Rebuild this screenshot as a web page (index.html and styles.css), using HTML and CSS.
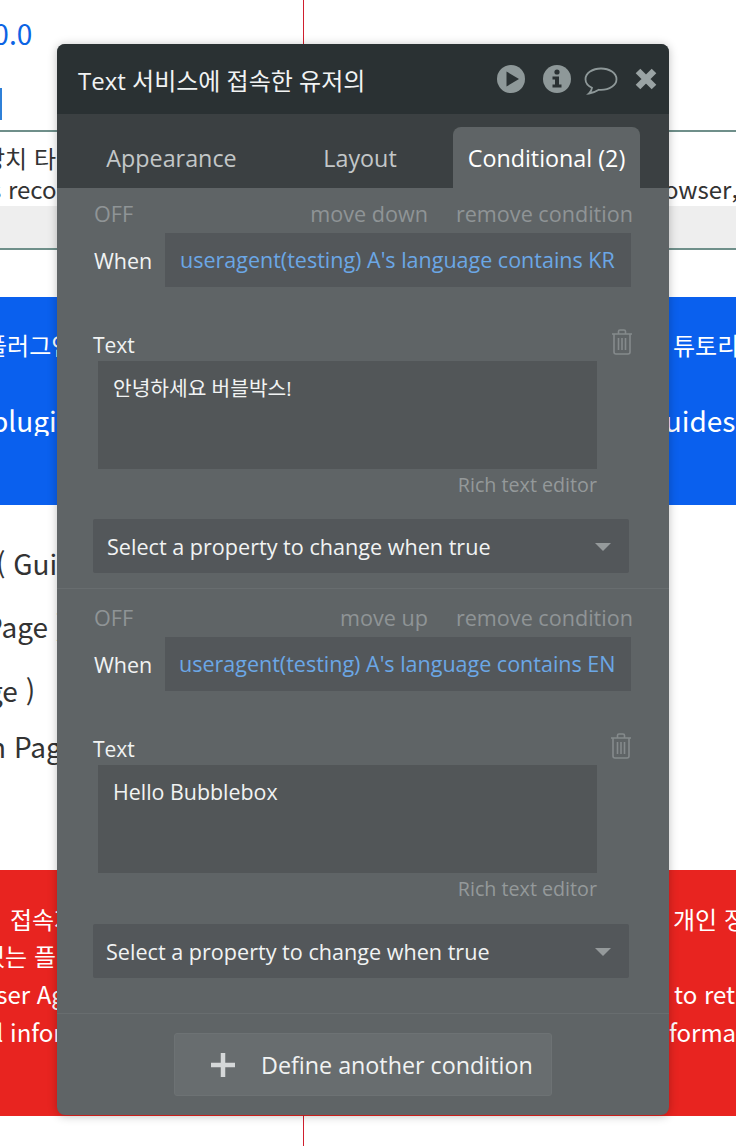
FILE: index.html
```html
<!DOCTYPE html>
<html lang="ko">
<head>
    <meta charset="UTF-8">
    <meta name="viewport" content="width=device-width, initial-scale=1.0">
    <title>Text 서비스에 접속한 유저의</title>
    <link rel="stylesheet" href="styles.css">
</head>
<body>
    <div class="page">
        <!-- page behind the editor, only the edges show -->
        <div class="guide-line"></div>
        <div class="version">1.0.0</div>
        <div class="version-tab"></div>
        <div class="info-table">
            <div class="line row-ko"><span class="left shift-ko">장치 타입</span><span class="right"></span></div>
            <div class="line row-en"><span class="left shift-en">s record</span><span class="right shift-browser">browser,</span></div>
            <div class="gray-row"></div>
        </div>
        <div class="band blue">
            <div class="line band-ko"><span class="left shift-plugin-ko">플러그인</span><span class="right shift-tutorial">튜토리얼</span></div>
            <div class="line band-en"><span class="left shift-plugin">plugin</span><span class="right shift-guides">guides</span></div>
        </div>
        <div class="links">
            <div class="link link-a">( Guide</div>
            <div class="link link-b">Page )</div>
            <div class="link link-c">ge )</div>
            <div class="link link-d">n Page</div>
        </div>
        <div class="band red">
            <div class="line red-1"><span class="left shift-r1">접속자</span><span class="right shift-r1b">개인 정보</span></div>
            <div class="line red-2"><span class="left shift-r2">있는 플러그인</span><span class="right"></span></div>
            <div class="line red-3"><span class="left shift-r3">User Agent</span><span class="right shift-r3b">to return</span></div>
            <div class="line red-4"><span class="left shift-r4">al information</span><span class="right shift-r4b">formation</span></div>
        </div>

        <div class="editor">
            <div class="editor-head">
                <div class="editor-title">Text 서비스에 접속한 유저의</div>
                <div class="head-icons">
                    <svg class="icon-play" width="28" height="28" viewBox="0 0 28 28"><circle cx="14" cy="14" r="14" fill="#8e9899"/><path d="M9.500 6.500 22 14 9.500 21.500Z" fill="#2a3133"/></svg>
                    <svg class="icon-info" width="28" height="28" viewBox="0 0 28 28"><circle cx="14" cy="14" r="14" fill="#8e9899"/><circle cx="14" cy="7" r="2.600" fill="#2a3133"/><path d="M9.500 11.500H16V19.500H18.500V22.500H9.500V19.500H12V14.500H9.500Z" fill="#2a3133"/></svg>
                    <svg class="icon-chat" width="34" height="28" viewBox="0 0 34 28"><path d="M17 1.500C8.500 1.500 1.500 6.200 1.500 12.200 1.500 15.800 4 18.800 8 20.700 7.800 22.800 6.800 25 5 26.500 9 26 12.500 24.300 14.800 22.800 15.500 22.900 16.300 22.900 17 22.900 25.500 22.900 32.500 18.200 32.500 12.200 32.500 6.200 25.500 1.500 17 1.500Z" fill="none" stroke="#8e9899" stroke-width="1.800"/></svg>
                    <svg class="icon-close" width="22" height="22" viewBox="0 0 22 22"><path d="M3 3 19 19M19 3 3 19" stroke="#9aa3a4" stroke-width="6.500"/></svg>
                </div>
            </div>
            <div class="tabs">
                <div class="tab tab-appearance">Appearance</div>
                <div class="tab tab-layout">Layout</div>
                <div class="tab tab-active">Conditional (2)</div>
            </div>

            <div class="condition first">
                <div class="cond-top">
                    <span class="off">OFF</span>
                    <span class="move">move down</span>
                    <span class="remove">remove condition</span>
                </div>
                <div class="when-row">
                    <span class="when">When</span>
                    <div class="when-field">useragent(testing) A's language contains KR</div>
                </div>
                <div class="prop-label">
                    <span>Text</span>
                    <svg class="trash" width="22" height="26" viewBox="0 0 22 26"><path d="M1 5H21M7.500 5V2.500Q7.500 1 9 1H13Q14.500 1 14.500 2.500V5M3 5V23Q3 25 5 25H17Q19 25 19 23V5M7.500 9V21M11 9V21M14.500 9V21" fill="none" stroke="#858a8c" stroke-width="1.600"/></svg>
                </div>
                <div class="text-box korean">안녕하세요 버블박스!</div>
                <div class="rich">Rich text editor</div>
                <div class="select">
                    <span>Select a property to change when true</span>
                    <span class="caret"></span>
                </div>
            </div>

            <div class="condition second">
                <div class="cond-top">
                    <span class="off">OFF</span>
                    <span class="move">move up</span>
                    <span class="remove">remove condition</span>
                </div>
                <div class="when-row">
                    <span class="when">When</span>
                    <div class="when-field">useragent(testing) A's language contains EN</div>
                </div>
                <div class="prop-label">
                    <span>Text</span>
                    <svg class="trash" width="22" height="26" viewBox="0 0 22 26"><path d="M1 5H21M7.500 5V2.500Q7.500 1 9 1H13Q14.500 1 14.500 2.500V5M3 5V23Q3 25 5 25H17Q19 25 19 23V5M7.500 9V21M11 9V21M14.500 9V21" fill="none" stroke="#858a8c" stroke-width="1.600"/></svg>
                </div>
                <div class="text-box">Hello Bubblebox</div>
                <div class="rich">Rich text editor</div>
                <div class="select">
                    <span>Select a property to change when true</span>
                    <span class="caret"></span>
                </div>
            </div>

            <div class="editor-foot">
                <button class="add-btn">
                    <svg width="26" height="26" viewBox="0 0 26 26"><path d="M13 1V25M1 13H25" stroke="#d5d8d9" stroke-width="4.500"/></svg>
                    <span>Define another condition</span>
                </button>
            </div>
        </div>
    </div>
</body>
</html>
```

FILE: styles.css
```css
* {
    box-sizing: border-box;
}
body {
    margin: 0;
    background-color: white;
    font-family: "Noto Sans CJK KR", "Noto Sans", sans-serif;
}
.page {
    position: relative;
    width: 736px;
    height: 1146px;
    overflow: hidden;
    color: #333;
}
.guide-line {
    position: absolute;
    left: 303px;
    top: 0;
    width: 1px;
    height: 100%;
    background-color: #d01f2e;
}

/* backdrop */
.version {
    height: 88px;
    margin-left: -30px;
    padding-top: 13px;
    font-size: 28px;
    line-height: 40px;
    color: #0c64e4;
}
.version-tab {
    width: 2px;
    height: 32px;
    margin-bottom: 10px;
    background-color: #2f80d8;
}
.info-table {
    height: 120px;
    border-top: 2px solid #6f8f8a;
    border-bottom: 2px solid #6f8f8a;
    margin-bottom: 47px;
}
.gray-row {
    height: 42px;
    margin-top: 1px;
    background-color: #eeeeee;
}
.line {
    display: grid;
    grid-template-columns: 303px 433px;
    white-space: nowrap;
    font-size: 24px;
    line-height: 32px;
}
.left, .right {
    overflow: hidden;
}
.row-ko {
    margin-top: 10px;
}
.row-en {
    height: 32px;
    margin-top: -1px;
}
.shift-ko {
    margin-left: -17px;
}
.shift-en {
    margin-left: -10px;
    overflow: visible;
}
.shift-browser {
    padding-left: 337px;
}
.band {
    color: white;
}
.blue {
    height: 208px;
    padding-top: 32px;
    background-color: #0a60ee;
}
.band-ko {
    margin-bottom: 44px;
}
.band-en {
    font-size: 28px;
    margin-top: -1px;
}
.shift-plugin-ko {
    margin-left: -15px;
}
.shift-tutorial {
    padding-left: 370px;
}
.shift-plugin {
    margin-left: -9px;
}
.shift-guides {
    padding-left: 346px;
}
.links {
    height: 365px;
    padding-top: 38px;
    font-size: 28px;
    line-height: 40px;
}
.link-a {
    margin-left: -4px;
    height: 63px;
}
.link-b {
    margin-left: -15px;
    height: 64px;
}
.link-c {
    margin-left: -13px;
    height: 56px;
}
.link-d {
    margin-left: -11px;
}
.red {
    height: 246px;
    padding-top: 31px;
    background-color: #e82420;
}
.red .line {
    height: 38px;
    line-height: 36px;
}
.red .red-1 {
    height: 37px;
}
.shift-r1 {
    padding-left: 10px;
}
.shift-r1b {
    padding-left: 370px;
}
.shift-r2 {
    margin-left: -17px;
}
.shift-r3 {
    margin-left: -21px;
}
.shift-r3b {
    padding-left: 371px;
}
.shift-r4 {
    margin-left: -17px;
}
.shift-r4b {
    padding-left: 366px;
}

/* editor window */
.editor {
    position: absolute;
    left: 57px;
    top: 44px;
    width: 612px;
    height: 1071px;
    border-radius: 8px;
    overflow: hidden;
    background-color: #5f6466;
    box-shadow: 0 1px 10px rgba(0,0,0,0.25);
    font-family: "Open Sans", "Noto Sans CJK KR", sans-serif;
    color: #f1f3f3;
}
.editor-head {
    display: flex;
    align-items: center;
    justify-content: space-between;
    height: 70px;
    padding: 0 12px 0 21px;
    background-color: #2a3133;
}
.editor-title {
    font-size: 24px;
}
.head-icons {
    display: flex;
    align-items: center;
    gap: 17px;
}
.icon-info {
    margin-left: 1px;
}
.icon-chat {
    margin-top: 4px;
    margin-left: -4px;
}
.tabs {
    display: flex;
    align-items: flex-end;
    height: 74px;
    background-color: #3b4042;
    font-size: 23.300px;
}
.tab {
    color: #c3c7c8;
    line-height: 63px;
    height: 61px;
    text-align: center;
}
.tab-appearance {
    width: 229px;
}
.tab-layout {
    width: 167px;
    padding-right: 19px;
}
.tab-active {
    width: 187px;
    border-radius: 8px 8px 0 0;
    background-color: #5f6466;
    color: white;
}

.condition {
    height: 401px;
    padding: 0 36px;
    border-bottom: 1px solid #686d6f;
}
.condition.second {
    height: 425px;
}
.cond-top {
    display: flex;
    align-items: center;
    height: 25px;
    padding-top: 25px;
    color: #8f9496;
    font-size: 21.600px;
    white-space: nowrap;
}
.second .cond-top {
    height: 28px;
    padding-top: 28px;
}
.off {
    margin-left: 1px;
}
.cond-top .move {
    flex: 1;
    text-align: right;
    margin-right: 28px;
}
.when-row {
    display: flex;
    align-items: center;
    gap: 14px;
    margin-top: 20px;
}
.when {
    width: 58px;
    margin-left: 1px;
    margin-right: -1px;
    font-size: 21.500px;
}
.when-field {
    width: 466px;
    height: 54px;
    flex: none;
    padding-left: 15px;
    background-color: #53575a;
    color: #6ba7e6;
    font-size: 21.500px;
    line-height: 54px;
    white-space: nowrap;
}
.second .when-field {
    padding-left: 14px;
}
.prop-label {
    display: flex;
    align-items: flex-start;
    justify-content: space-between;
    height: 30px;
    margin-top: 41px;
    font-size: 21px;
    line-height: 34px;
}
.second .prop-label {
    padding-right: 1px;
}
.trash {
    margin-top: 1px;
}
.text-box {
    width: 499px;
    height: 108px;
    margin: 3px 0 0 5px;
    padding: 12px 15px;
    background-color: #525658;
    font-size: 21.400px;
    line-height: 30px;
}
.text-box.korean {
    font-size: 20.300px;
}
.rich {
    width: 504px;
    margin-top: 3px;
    color: #94999a;
    font-size: 19.700px;
    line-height: 26px;
    text-align: right;
}
.select {
    display: flex;
    align-items: center;
    justify-content: space-between;
    width: 536px;
    height: 54px;
    margin-top: 21px;
    padding: 1px 18px 0 14px;
    border-radius: 2px;
    background-color: #53575a;
    font-size: 21.600px;
}
.second .select {
    margin-top: 22px;
    padding-left: 13px;
}
.caret {
    width: 0;
    height: 0;
    border-left: 8px solid transparent;
    border-right: 8px solid transparent;
    border-top: 8px solid #959a9b;
}
.editor-foot {
    display: flex;
    justify-content: center;
    padding-top: 19px;
}
.add-btn {
    display: flex;
    align-items: center;
    gap: 25px;
    width: 378px;
    height: 63px;
    padding: 0 0 0 35px;
    border: 1px solid #6d7274;
    border-radius: 3px;
    background-color: #686d6f;
    color: #f1f3f3;
    font-family: "Open Sans", sans-serif;
    font-size: 23.300px;
}
```
